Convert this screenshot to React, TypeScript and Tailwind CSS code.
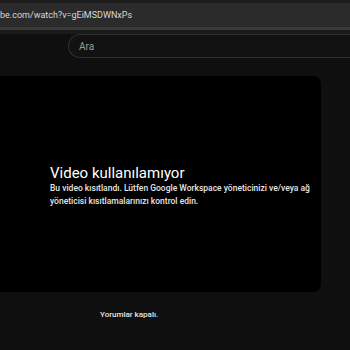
export default function App() {
    return (
        <div className="w-[350px] h-[350px] overflow-hidden bg-[#0f0f0f] font-['Roboto',sans-serif]">
            {/* Browser chrome */}
            <div className="h-[3px] bg-[#1c1c1c]" />
            <div className="h-[24px] bg-[#2b2b2b] flex items-center overflow-hidden pt-[2px]">
                <span className="text-[9px] text-[#d8d8d8] whitespace-nowrap">
                    be.com/watch?v=gEiMSDWNxPs
                </span>
            </div>
            <div className="h-[3px] bg-[#3a3a3a]" />
            <div className="h-[4px] bg-[#1a1a1a]" />

            {/* Header */}
            <div className="h-[42px] flex">
                <div className="ml-[68px] h-[24px] flex-1 rounded-l-full border border-r-0 border-[#303030] bg-[#121212] flex items-center pl-[10px]">
                    <span className="text-[10px] text-[#9a9a9a]">Ara</span>
                </div>
            </div>

            {/* Player */}
            <div className="w-[321px] h-[216px] bg-black rounded-r-[8px] flex flex-col pl-[50px] pt-[89px]">
                <h1 className="text-[15px] leading-[16px] text-white">Video kullanılamıyor</h1>
                <p className="mt-[1px] text-[8.5px] leading-[13px] text-[#e5e5e5] font-medium w-[265px]">
                    Bu video kısıtlandı. Lütfen Google Workspace yöneticinizi ve/veya ağ yöneticisi kısıtlamalarınızı kontrol edin.
                </p>
            </div>

            {/* Comments */}
            <div className="pt-[14px] pl-[100px] leading-[12px]">
                <span className="text-[8px] text-[#e5e5e5] font-medium">Yorumlar kapalı.</span>
            </div>
        </div>
    );
}
